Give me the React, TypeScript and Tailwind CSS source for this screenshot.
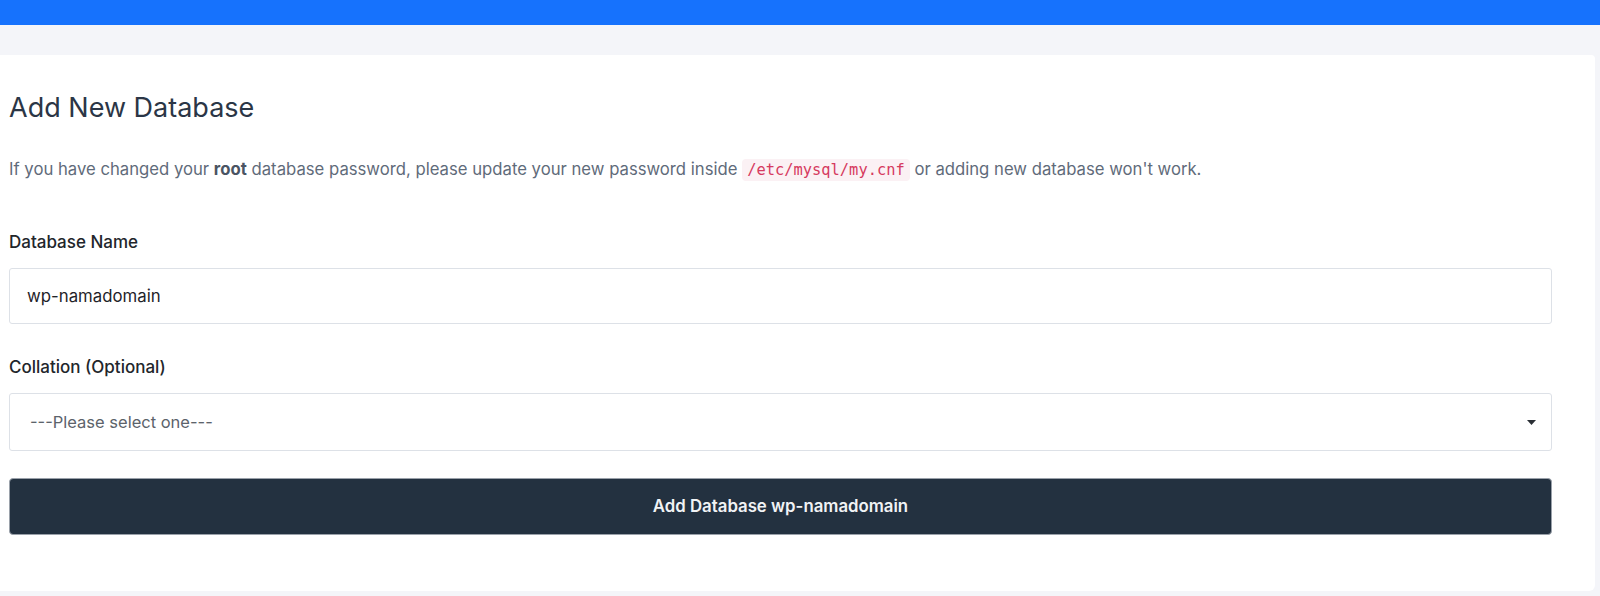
import React from "react";

const App: React.FC = () => {
  return (
    <div
      className="min-h-[596px] bg-[#f4f5f9] flex flex-col"
      style={{ fontFamily: "Inter, 'Noto Sans', sans-serif" }}
    >
      {/* Top bar */}
      <div className="h-[25px] bg-[#1672fd]" />

      <div className="pt-[30px] pr-[5px]">
        {/* Card */}
        <div className="bg-white rounded-br-md rounded-tr-sm pl-[9px] pr-[43px] pt-[36px] pb-[56px]">
          <h1 className="text-[27px] leading-[34px] text-[#2b3646] font-normal">
            Add New Database
          </h1>

          <p className="mt-[31px] text-[16.7px] leading-[26px] text-[#5f6b7a]">
            If you have changed your <strong className="font-bold text-[#4a5463]">root</strong> database password,
            please update your new password inside{" "}
            <code
              className="bg-[#fbf1f4] text-[#d63a5f] rounded px-[5px] py-[2px] text-[15.4px]"
              style={{ fontFamily: "'DejaVu Sans Mono', 'Liberation Mono', monospace" }}
            >
              /etc/mysql/my.cnf
            </code>{" "}
            or adding new database won't work.
          </p>

          <div className="mt-[49px]">
            <label className="block text-[17px] leading-[20px] font-medium text-[#22262b]">
              Database Name
            </label>
            <input
              readOnly
              value="wp-namadomain"
              className="mt-[16px] block w-full h-[56px] border border-[#dde1e7] rounded-[3px] px-[17px] text-[16.8px] text-[#1f2329] outline-none"
            />
          </div>

          <div className="mt-[33px]">
            <label className="block text-[17px] leading-[20px] font-medium text-[#22262b]">
              Collation (Optional)
            </label>
            <div className="mt-[16px] flex items-center justify-between h-[58px] border border-[#dde1e7] rounded-[3px] pl-[20px] pr-[15px]">
              <span className="text-[16.5px] text-[#5c636b]">---Please select one---</span>
              <svg width="9" height="5" viewBox="0 0 9 5" className="text-[#2a2f35]">
                <path d="M0 0 L9 0 L4.5 5 Z" fill="currentColor" />
              </svg>
            </div>
          </div>

          <button className="mt-[27px] w-full h-[57px] bg-[#233140] border border-[#9aa1aa] rounded-[4px] text-[#f1f3f5] text-[16.8px] font-semibold">
            Add Database wp-namadomain
          </button>
        </div>
      </div>
    </div>
  );
};

export default App;
